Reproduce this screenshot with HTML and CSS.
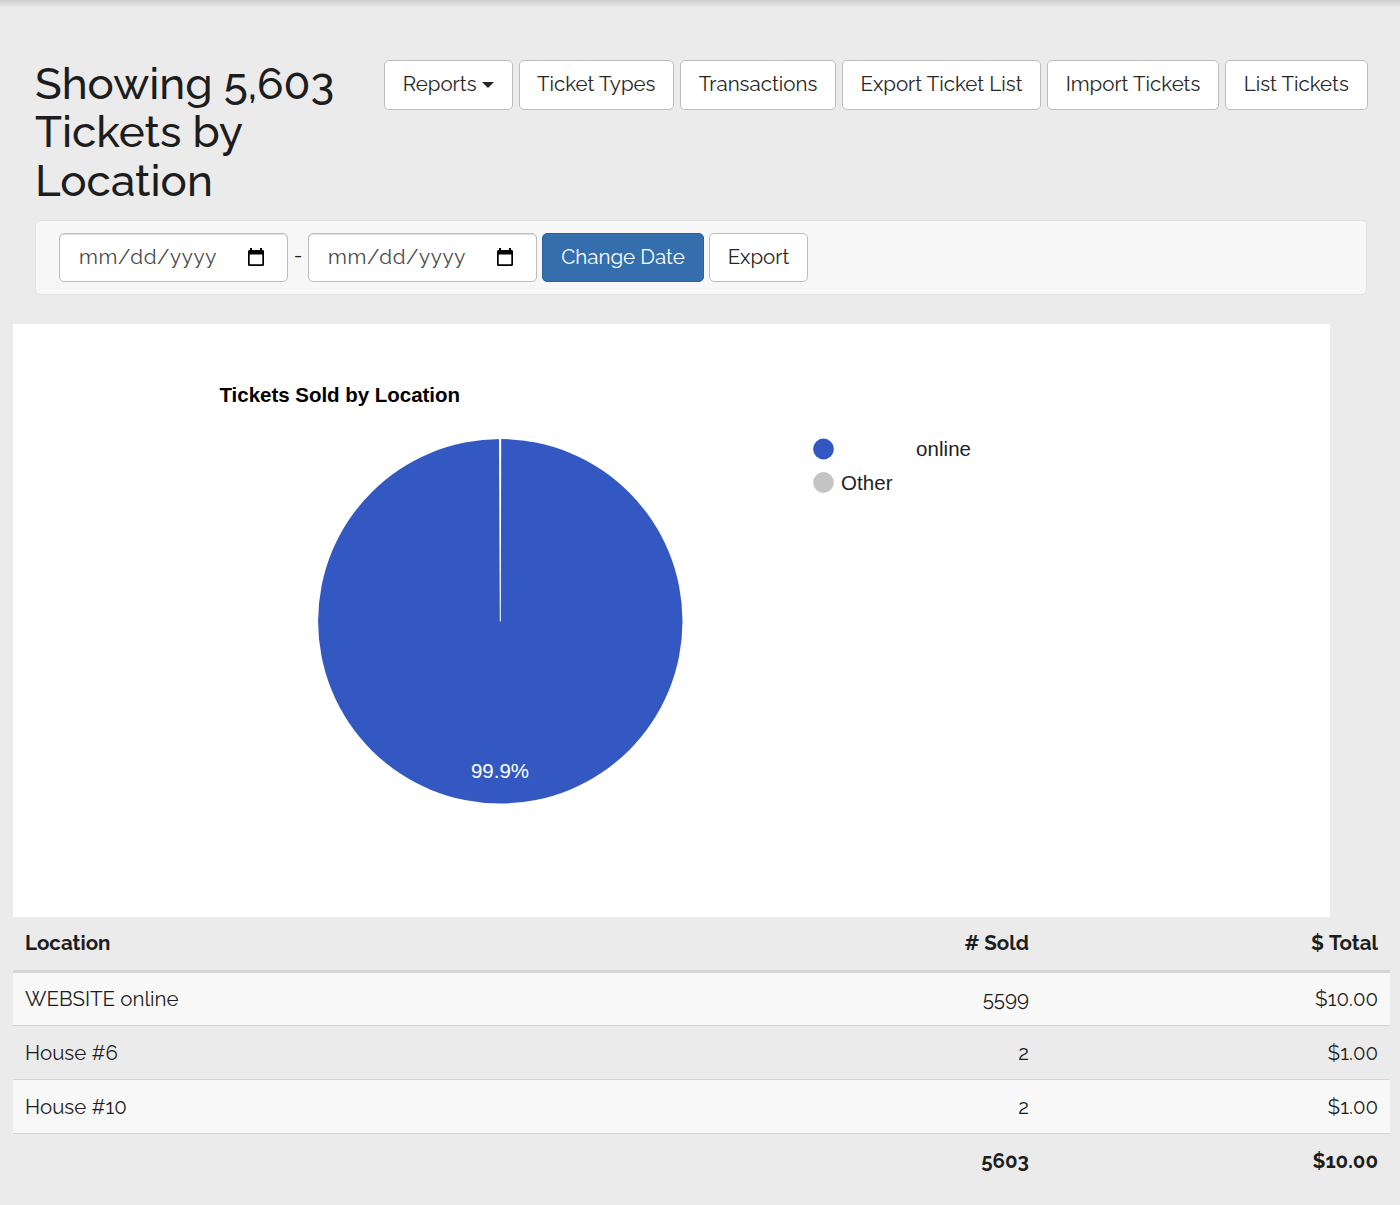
FILE: index.html
```html
<!DOCTYPE html>
<html lang="en">
<head>
    <meta charset="UTF-8">
    <meta name="viewport" content="width=device-width, initial-scale=1.0">
    <title>Tickets by Location</title>
    <link rel="stylesheet" href="styles.css">
</head>
<body>
    <div class="top-shadow"></div>
    <div class="page-header">
        <h1>Showing 5,603<br>Tickets by<br>Location</h1>
        <div class="toolbar">
            <button type="button" class="btn btn-reports">Reports <span class="caret"></span></button>
            <button type="button" class="btn btn-types">Ticket Types</button>
            <button type="button" class="btn btn-transactions">Transactions</button>
            <button type="button" class="btn btn-export-list">Export Ticket List</button>
            <button type="button" class="btn btn-import">Import Tickets</button>
            <button type="button" class="btn btn-list">List Tickets</button>
        </div>
    </div>

    <form class="well">
        <div class="date-field">
            <span>mm/dd/yyyy</span>
            <svg width="18" height="20" viewBox="0 0 18 20"><path d="M3 1h2v2h8V1h2v2h1Q17 3 17 4.500V17.500Q17 19 15.500 19H2.500Q1 19 1 17.500V4.500Q1 3 2.500 3H3zM2.700 7.500V17.300h12.600V7.500z" fill-rule="evenodd"/></svg>
        </div>
        <span class="dash">-</span>
        <div class="date-field">
            <span>mm/dd/yyyy</span>
            <svg width="18" height="20" viewBox="0 0 18 20"><path d="M3 1h2v2h8V1h2v2h1Q17 3 17 4.500V17.500Q17 19 15.500 19H2.500Q1 19 1 17.500V4.500Q1 3 2.500 3H3zM2.700 7.500V17.300h12.600V7.500z" fill-rule="evenodd"/></svg>
        </div>
        <button type="button" class="btn btn-primary">Change Date</button>
        <button type="button" class="btn btn-export">Export</button>
    </form>

    <div class="chart">
        <svg width="1317" height="592" viewBox="0 0 1317 592">
            <text class="chart-title" x="206.500" y="78" textLength="240.500">Tickets Sold by Location</text>
            <circle cx="487.300" cy="297.300" r="182.200" fill="#3358c1"/>
            <path d="M486 115h2.200l-.4 182.500h-1z" fill="#fff"/>
            <text class="slice-label" x="487" y="454" text-anchor="middle" textLength="58" lengthAdjust="spacingAndGlyphs">99.9%</text>
            <circle cx="810.500" cy="125" r="10.400" fill="#3358c1"/>
            <text class="legend" x="903" y="132" textLength="55">online</text>
            <circle cx="810.500" cy="158.500" r="10.400" fill="#c4c4c4"/>
            <text class="legend" x="828" y="166" textLength="51.500">Other</text>
        </svg>
    </div>

    <table>
        <thead>
            <tr><th>Location</th><th class="num">#&nbsp;Sold</th><th class="num">$&nbsp;Total</th></tr>
        </thead>
        <tbody>
            <tr><td>WEBSITE online</td><td class="num">5599</td><td class="num">$10.00</td></tr>
            <tr><td>House #6</td><td class="num">2</td><td class="num">$1.00</td></tr>
            <tr><td>House #10</td><td class="num">2</td><td class="num">$1.00</td></tr>
        </tbody>
        <tfoot>
            <tr><td></td><td class="num">5603</td><td class="num">$10.00</td></tr>
        </tfoot>
    </table>
</body>
</html>
```
FILE: styles.css
```css
* {
    box-sizing: border-box;
}

body {
    margin: 0;
    height: 1205px;
    overflow: hidden;
    background: #ebebeb;
    color: #1d1d1d;
    font-family: Raleway, Lato, sans-serif;
    font-size: 20.500px;
    font-variant-numeric: oldstyle-nums;
}

.top-shadow {
    height: 8px;
    background: linear-gradient(#cfcfcf, #ebebeb);
}

.page-header {
    display: flex;
    justify-content: space-between;
    align-items: flex-start;
    height: 212px;
    padding: 52px 32.500px 0 35px;
}

h1 {
    margin: 0;
    font-size: 43.900px;
    font-weight: 500;
    line-height: 48.300px;
    white-space: nowrap;
}

.toolbar {
    display: flex;
    gap: 6px;
}

.btn {
    height: 49.500px;
    padding: 0 0 1px;
    border: 1px solid #bcbcbc;
    border-radius: 5px;
    background: #fff;
    color: #262626;
    font-family: inherit;
    font-size: 20.500px;
    white-space: nowrap;
}

.btn-reports {
    width: 128.500px;
}

.btn-types {
    width: 155.500px;
}

.btn-transactions {
    width: 156px;
}

.btn-export-list {
    width: 199px;
}

.btn-import {
    width: 172px;
}

.btn-list {
    width: 142.500px;
}

.caret {
    display: inline-block;
    border: 6px solid transparent;
    border-top-color: #262626;
    border-bottom: 0;
    vertical-align: 3px;
}

/* Date filter */
.well {
    display: flex;
    align-items: center;
    width: 1332px;
    height: 75px;
    margin: 0 0 29px 35px;
    padding: 0 23px;
    border: 1px solid #e2e2e2;
    border-radius: 5px;
    background: #f7f7f7;
}

.date-field {
    display: flex;
    justify-content: space-between;
    align-items: center;
    width: 229px;
    height: 49.500px;
    padding: 0 22px 2px 19px;
    border: 1px solid #bcbcbc;
    border-radius: 5px;
    background: #fff;
    color: #484848;
    box-shadow: inset 0 1px 1px #e0e0e0;
    letter-spacing: 0.700px;
}

.date-field svg {
    fill: #000;
}

.dash {
    width: 20px;
    padding-bottom: 5px;
    text-align: center;
}

.btn-primary {
    width: 162px;
    margin: 0 5px;
    border-color: #2d619b;
    background: #346eac;
    color: #fff;
}

.btn-export {
    width: 99px;
}

/* Pie chart */
.chart {
    width: 1317px;
    height: 593px;
    margin-left: 13px;
    background: #fff;
}

.chart text {
    font-family: "Liberation Sans", Arial, sans-serif;
    font-size: 20.500px;
    font-variant-numeric: normal;
}

.chart .chart-title {
    font-weight: bold;
}

.slice-label {
    fill: #fff;
}

.legend {
    fill: #222;
}

table {
    width: 1377px;
    margin-left: 13px;
    border-collapse: collapse;
    table-layout: fixed;
}

th,
td {
    height: 54.200px;
    padding: 1px 12px 0;
    border-top: 1px solid #d4d4d4;
    text-align: left;
}

th {
    height: 54px;
    padding: 0 12px;
    border-top: 0;
    border-bottom: 3px solid #d5d5d5;
}

th:nth-child(2) {
    width: 350px;
}

th:nth-child(3) {
    width: 349px;
}

.num {
    text-align: right;
}

tbody tr:nth-child(odd) {
    background: #f8f8f8;
}

tfoot td {
    font-weight: bold;
}
```
